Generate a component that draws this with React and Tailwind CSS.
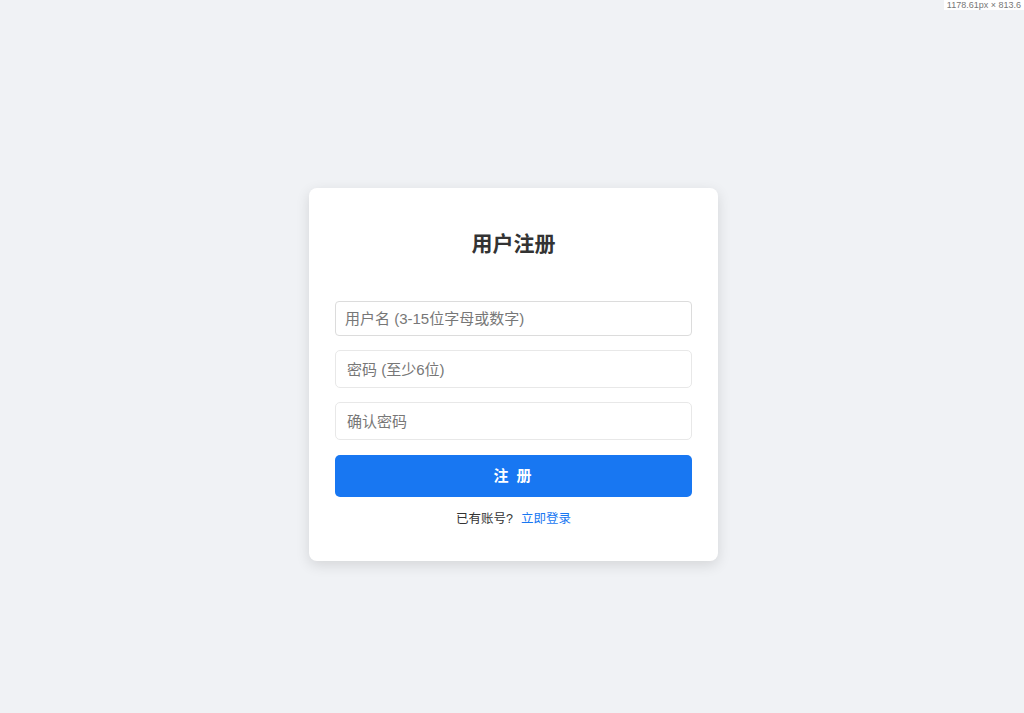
import { useState } from "react";

export default function App() {
    const [form, setForm] = useState({ username: "", password: "", confirm: "" });

    const onChange = (e) => setForm({ ...form, [e.target.name]: e.target.value });

    return (
        <div className="relative min-h-screen bg-[#f0f2f5] font-['Liberation_Sans','Noto_Sans_CJK_SC',sans-serif]">
            <div className="absolute top-0 right-0 bg-white px-[3px] text-[9px] leading-[10px] text-[#777]">1178.61px × 813.6</div>
            <div className="flex justify-center pt-[188px] pl-[3px]">
                <div className="w-[409px] rounded-[8px] bg-white px-[26px] pt-[41px] pb-[33px] shadow-[0_4px_14px_rgba(0,0,0,0.12)]">
                    <h2 className="mb-[42px] text-center text-[21px] font-bold leading-[30px] text-[#333]">用户注册</h2>
                    <div className="flex flex-col">
                        <input
                            name="username"
                            value={form.username}
                            onChange={onChange}
                            placeholder="用户名 (3-15位字母或数字)"
                            className="h-[35px] w-full rounded-[4px] border border-[#dcdcdc] px-[9px] text-[15px] text-[#333] outline-none placeholder:text-[#777]"
                        />
                        <input
                            name="password"
                            type="password"
                            value={form.password}
                            onChange={onChange}
                            placeholder="密码 (至少6位)"
                            className="mt-[14px] h-[38px] w-full rounded-[5px] border border-[#e8e8e8] px-[11px] text-[15px] text-[#333] outline-none placeholder:text-[#777]"
                        />
                        <input
                            name="confirm"
                            type="password"
                            value={form.confirm}
                            onChange={onChange}
                            placeholder="确认密码"
                            className="mt-[14px] h-[38px] w-full rounded-[5px] border border-[#e8e8e8] px-[11px] text-[15px] text-[#333] outline-none placeholder:text-[#777]"
                        />
                        <button className="mt-[15px] h-[42px] w-full rounded-[5px] bg-[#1877f2] text-[15px] font-bold tracking-[2px] text-white">
                            注 册
                        </button>
                    </div>
                    <p className="mt-[13px] text-center text-[12.5px] leading-[18px] text-[#333]">
                        已有账号?<a href="#" className="ml-[8px] text-[#1877f2]">立即登录</a>
                    </p>
                </div>
            </div>
        </div>
    );
}
